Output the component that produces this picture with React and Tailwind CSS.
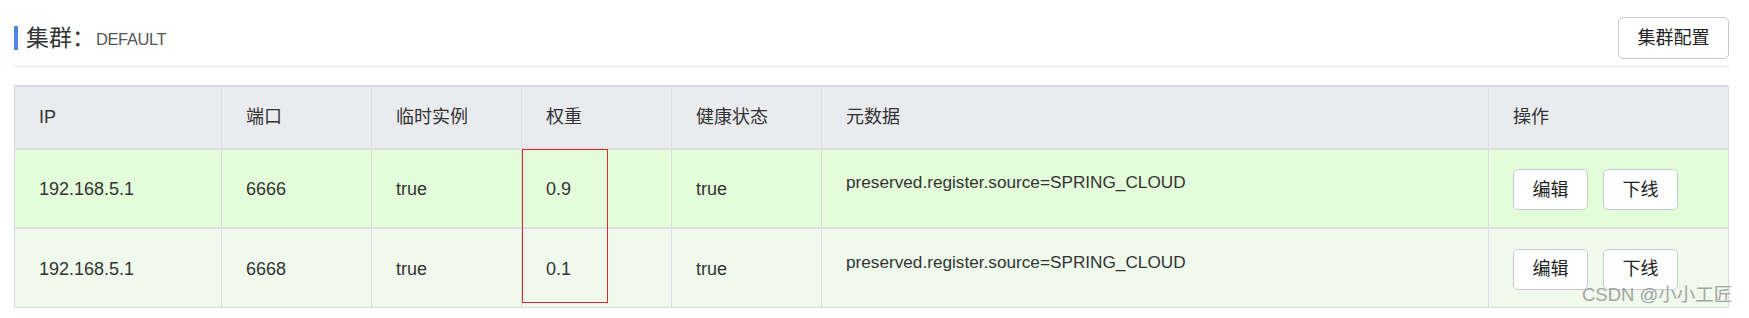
import React from "react";

const cols = [
  { key: "ip", label: "IP", w: "w-[207px]", fs: "text-[18px]" },
  { key: "port", label: "端口", w: "w-[150px]", fs: "text-[18px]" },
  { key: "eph", label: "临时实例", w: "w-[150px]", fs: "text-[18px]" },
  { key: "weight", label: "权重", w: "w-[150px]", fs: "text-[18px]" },
  { key: "health", label: "健康状态", w: "w-[150px]", fs: "text-[18px]" },
  { key: "meta", label: "元数据", w: "w-[667px]", fs: "text-[17.2px]" },
  { key: "op", label: "操作", w: "w-[239px]", fs: "text-[18px]" },
];

const rows = [
  { ip: "192.168.5.1", port: "6666", eph: "true", weight: "0.9", health: "true", meta: "preserved.register.source=SPRING_CLOUD", bg: "bg-[#e3fcd9]" },
  { ip: "192.168.5.1", port: "6668", eph: "true", weight: "0.1", health: "true", meta: "preserved.register.source=SPRING_CLOUD", bg: "bg-[#effaed]" },
];

function Btn({ children }) {
  return (
    <button className="h-[41px] w-[75px] rounded-[5px] border border-[#c9cbd1] bg-white text-[18px] text-[#222] leading-none">
      {children}
    </button>
  );
}

export default function App() {
  return (
    <div
      className="relative w-[1749px] h-[318px] bg-white text-[#333] overflow-hidden"
      style={{ fontFamily: '"Liberation Sans", "Noto Sans CJK SC", sans-serif' }}
    >
      <div className="ml-[14px] w-[1715px] pt-[17px]">
        {/* title row */}
        <div className="flex h-[42px] items-center justify-between">
          <div className="flex items-center">
            <div className="h-[24px] w-[4px] bg-[#4f84f1]" />
            <span className="ml-[8px] text-[23px] leading-none text-[#333]">集群：</span>
            <span className="ml-[1px] pt-[2px] text-[16.5px] leading-none tracking-[-0.4px] text-[#555]">DEFAULT</span>
          </div>
          <button className="h-[42px] w-[111px] rounded-[5px] border border-[#c6c8ce] bg-white text-[18px] text-[#222] leading-none">
            集群配置
          </button>
        </div>
        <div className="mt-[7px] h-px w-full bg-[#e6e7eb]" />

        {/* table */}
        <div className="relative mt-[18px] w-[1715px] border border-t-2 border-[#d9dadf]">
          <div className="flex h-[63px] bg-[#eaebef] border-b-2 border-[#dcdde2]">
            {cols.map((c, i) => (
              <div
                key={c.key}
                className={`${c.w} flex items-center pl-6 text-[18px] text-[#333] ${i < cols.length - 1 ? "border-r border-[#dcdde2]" : ""}`}
              >
                {c.label}
              </div>
            ))}
          </div>
          {rows.map((r, ri) => (
            <div
              key={ri}
              className={`flex ${ri === 0 ? "h-[79px] border-b-2 border-[#dcdde2]" : "h-[78px]"} ${r.bg}`}
            >
              {cols.map((c, i) => (
                <div
                  key={c.key}
                  className={`${c.w} flex items-center pl-6 pt-[2px] ${c.fs} text-[#333] ${i < cols.length - 1 ? "border-r border-[#dcdde2]" : ""} ${c.key === "meta" ? "pb-[13px]" : ""} ${c.key === "op" ? "gap-[15px]" : ""}`}
                >
                  {c.key === "op" ? (
                    <>
                      <Btn>编辑</Btn>
                      <Btn>下线</Btn>
                    </>
                  ) : (
                    r[c.key]
                  )}
                </div>
              ))}
            </div>
          ))}
          {/* red annotation box */}
          <div className="pointer-events-none absolute left-[507px] top-[62px] h-[154px] w-[86px] border border-[#e3262b]" />
        </div>
      </div>

      {/* watermark */}
      <div className="pointer-events-none absolute left-[1582px] top-[286px] text-[18.5px] leading-none text-[#9b9b9b] opacity-90">
        CSDN @小小工匠
      </div>
    </div>
  );
}
